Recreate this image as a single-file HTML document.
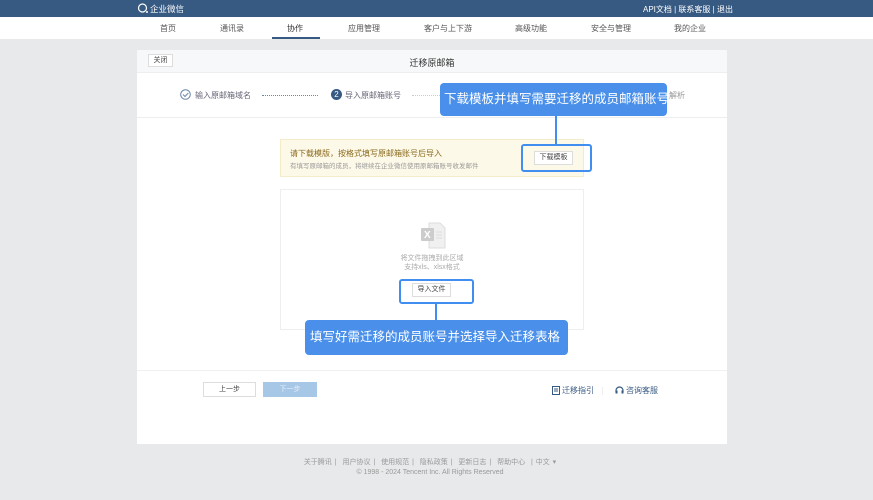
<!DOCTYPE html>
<html><head><meta charset="utf-8"><style>
*{margin:0;padding:0;box-sizing:border-box}
body{width:873px;height:500px;background:#e8e9eb;font-family:"Liberation Sans","Noto Sans CJK SC",sans-serif;position:relative;overflow:hidden;color:#333}
.a{position:absolute}
.top{left:0;top:0;width:873px;height:17px;background:#375a82;color:#fff;font-size:8px}
.nav{left:0;top:17px;width:873px;height:22px;background:#fff;font-size:8px;color:#555}
.nav span{position:absolute;top:6px}
.card{left:137px;top:50px;width:590px;height:394px;background:#fff}
.btn{border:1px solid #ddd;background:#fafafa;font-size:7px;text-align:center;color:#444}
.hl{border:2px solid #3f8ef0;border-radius:3px}
.call{background:#4a90ea;color:#fff;border-radius:4px;font-size:12.5px;white-space:nowrap}
</style></head><body>
<div class="a top">
 <svg class="a" style="left:137px;top:3px" width="12" height="11" viewBox="0 0 12 11"><circle cx="5.5" cy="5" r="4" fill="none" stroke="#fff" stroke-width="1.2"/><circle cx="10" cy="9" r="1" fill="#fff"/></svg>
 <span class="a" style="left:150px;top:3px;font-size:8.5px">企业微信</span>
 <span class="a" style="left:643px;top:4px">API文档 | 联系客服 | 退出</span>
</div>
<div class="a nav">
 <span style="left:160px">首页</span><span style="left:220px">通讯录</span><span style="left:287px;color:#333">协作</span><span style="left:348px">应用管理</span><span style="left:424px">客户与上下游</span><span style="left:515px">高级功能</span><span style="left:591px">安全与管理</span><span style="left:674px">我的企业</span>
 <div class="a" style="left:272px;top:20px;width:48px;height:2px;background:#375a82"></div>
</div>
<div class="a card">
 <div class="a" style="left:0;top:0;width:590px;height:23px;background:#f7f8f9;border-bottom:1px solid #eee"></div>
 <div class="a btn" style="left:11px;top:4px;width:25px;height:13px;line-height:11px;background:#fff">关闭</div>
 <div class="a" style="left:0;top:6px;width:590px;text-align:center;font-size:9px">迁移原邮箱</div>
 <svg class="a" style="left:43px;top:39px" width="11" height="11"><circle cx="5.5" cy="5.5" r="4.8" fill="none" stroke="#6a86a8" stroke-width="1"/><path d="M3 5.5l2 2 3.3-3.5" fill="none" stroke="#6a86a8" stroke-width="1"/></svg>
 <span class="a" style="left:58px;top:40px;font-size:8px;color:#667">输入原邮箱域名</span>
 <div class="a" style="left:125px;top:45px;width:56px;border-top:1px dotted #6a86a8"></div>
 <div class="a" style="left:194px;top:39px;width:11px;height:11px;border-radius:50%;background:#375a82;color:#fff;font-size:8px;text-align:center;line-height:11px">2</div>
 <span class="a" style="left:208px;top:40px;font-size:8px;color:#667">导入原邮箱账号</span>
 <div class="a" style="left:275px;top:45px;width:30px;border-top:1px dotted #ccc"></div>
 <span class="a" style="left:532px;top:40px;font-size:8px;color:#999">解析</span>
 <div class="a" style="left:0;top:67px;width:590px;border-top:1px solid #eee"></div>
 <div class="a" style="left:143px;top:89px;width:304px;height:38px;background:#fdf9e8;border:1px solid #f4ebc8"></div>
 <span class="a" style="left:153px;top:98px;font-size:8px;color:#8a6a1e">请下载模版，按格式填写原邮箱账号后导入</span>
 <span class="a" style="left:153px;top:110px;font-size:6.5px;color:#999">有填写原邮箱的成员，将继续在企业微信使用原邮箱账号收发邮件</span>
 <div class="a btn" style="left:397px;top:101px;width:39px;height:14px;line-height:12px;background:#fff">下载模板</div>
 <div class="a" style="left:143px;top:139px;width:304px;height:141px;border:1px solid #eee"></div>
 <svg class="a" style="left:418px;top:172px" width="0" height="0"></svg>
 <div class="a" style="left:283px;top:172px;width:26px;height:26px">
  <svg width="27" height="27" viewBox="0 0 27 27"><path d="M9 1h11l5 5v20H9z" fill="#f0f0f0" stroke="#ddd"/><rect x="1" y="6" width="13" height="13" rx="1" fill="#ccc"/><text x="4" y="16" font-size="10" fill="#fff" font-family="Liberation Sans" font-weight="bold">X</text><path d="M16 10h6M16 13h6M16 16h6" stroke="#ddd"/></svg>
 </div>
 <div class="a" style="left:143px;top:204px;width:304px;text-align:center;font-size:7px;color:#aaa;line-height:9px">将文件拖拽到此区域<br>支持xls、xlsx格式</div>
 <div class="a btn" style="left:275px;top:233px;width:39px;height:14px;line-height:12px;background:#fff">导入文件</div>
 <div class="a" style="left:0;top:320px;width:590px;border-top:1px solid #f0f0f0"></div>
 <div class="a btn" style="left:66px;top:332px;width:53px;height:15px;line-height:13px;background:#fff">上一步</div>
 <div class="a" style="left:126px;top:332px;width:54px;height:15px;line-height:15px;background:#a7c7e7;color:#e5effa;font-size:7px;text-align:center">下一步</div>
 <svg class="a" style="left:415px;top:336px" width="8" height="9"><rect x="0.5" y="0.5" width="7" height="8" fill="none" stroke="#375a82"/><path d="M2 3h4M2 5h4" stroke="#375a82"/></svg>
 <span class="a" style="left:425px;top:335px;font-size:8px;color:#375a82">迁移指引</span>
 <div class="a" style="left:465px;top:337px;height:8px;border-left:1px solid #eee"></div>
 <svg class="a" style="left:478px;top:336px" width="9" height="9"><path d="M1 6V4.5a3.5 3.5 0 0 1 7 0V6" fill="none" stroke="#375a82" stroke-width="1.2"/><rect x="0.5" y="4.5" width="2" height="3" fill="#375a82"/><rect x="6.5" y="4.5" width="2" height="3" fill="#375a82"/></svg>
 <span class="a" style="left:489px;top:335px;font-size:8px;color:#375a82">咨询客服</span>
</div>
<div class="a hl" style="left:521px;top:144px;width:71px;height:28px"></div>
<div class="a hl" style="left:399px;top:279px;width:75px;height:25px"></div>
<div class="a" style="left:555px;top:115px;width:2px;height:30px;background:#3f8ef0"></div>
<div class="a" style="left:435px;top:303px;width:2px;height:18px;background:#3f8ef0"></div>
<div class="a call" style="left:440px;top:83px;width:227px;height:33px;line-height:33px;padding-left:4px">下载模板并填写需要迁移的成员邮箱账号</div>
<div class="a call" style="left:305px;top:320px;width:263px;height:35px;line-height:35px;padding-left:5px">填写好需迁移的成员账号并选择导入迁移表格</div>
<div class="a" style="left:0;top:457px;width:860px;text-align:center;font-size:7px;color:#999;word-spacing:1px">关于腾讯 | &nbsp;用户协议 | &nbsp;使用规范 | &nbsp;隐私政策 | &nbsp;更新日志 | &nbsp;帮助中心 &nbsp;| 中文 ▾</div>
<div class="a" style="left:0;top:469px;width:860px;text-align:center;font-size:7px;color:#999">© 1998 - 2024 Tencent Inc. All Rights Reserved</div>
</body></html>
